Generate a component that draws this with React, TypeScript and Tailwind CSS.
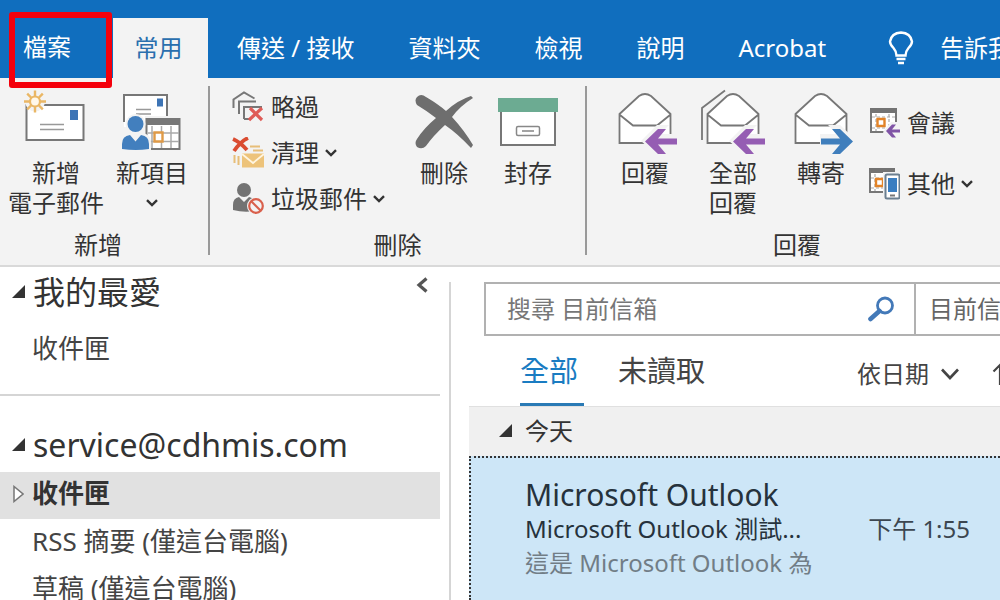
import type { ReactNode } from "react";

function ChevronDown({ wide = false }: { wide?: boolean }) {
  return wide ? (
    <svg className="h-3 w-[18px]" viewBox="0 0 18 12" fill="none" stroke="#444" strokeWidth="2.6">
      <path d="M1 1.500 9 10l8-8.500" />
    </svg>
  ) : (
    <svg className="h-2 w-3" viewBox="0 0 12 8" fill="none" stroke="#333" strokeWidth="2.4">
      <path d="M1 1.200 6 6l5-4.800" />
    </svg>
  );
}

function ExpandedMark() {
  return (
    <svg className="h-[13px] w-[13px] shrink-0" viewBox="0 0 13 13" fill="#333">
      <path d="M13 0v13H0z" />
    </svg>
  );
}

function NewMailIcon() {
  return (
    <svg className="h-16 w-16" viewBox="4 0 64 64" fill="none">
      <path d="M6.500 17h57v35h-57z" fill="#fff" stroke="#777" strokeWidth="2" />
      <path d="M50 22h8v10h-8z" fill="#3d74b5" />
      <path d="M20 36.500h24M20 41.500h24" stroke="#999" strokeWidth="1.500" />
      <circle cx="15" cy="13.500" r="10" fill="#f3f3f3" />
      <path d="M15 2.500v6M15 18.500v6M4 13.500h6M20 13.500h6M7.200 5.700l4.300 4.300M18.500 17l4.300 4.300M7.200 21.300l4.300-4.300M18.500 10l4.300-4.300" stroke="#eab765" strokeWidth="2.400" />
      <circle cx="15" cy="13.500" r="5" fill="#fff8ea" stroke="#eab765" strokeWidth="2.200" />
    </svg>
  );
}

function NewItemsIcon() {
  return (
    <svg className="h-16 w-16" viewBox="2 0 64 64" fill="none">
      <path d="M6 7h43v32H6z" fill="#fff" />
      <path d="M6 34V7h43v22" stroke="#777" strokeWidth="2" />
      <path d="M39 10.500h6v8h-6z" fill="#3d74b5" />
      <path d="M18 21.500h15M18 26h15" stroke="#999" strokeWidth="1.500" />
      <path d="M27 28h37v37H27z" fill="#f3f3f3" />
      <path d="M28.500 31h33v30h-33z" fill="#fff" stroke="#777" strokeWidth="2" />
      <path d="M28 30h34v7H28z" fill="#777" />
      <path d="M34 38v22M43.500 38v22M53 38v22M30 45h31M30 53.500h31" stroke="#aaa" strokeWidth="1.500" />
      <path d="M36.500 44.500h8v9h-8z" fill="#fff" stroke="#df9a47" strokeWidth="2.400" />
      <path d="M2 62V54q0-8 9-9h13q9 1 9 9v8z" fill="#f3f3f3" />
      <circle cx="17.500" cy="36" r="10" fill="#f3f3f3" />
      <circle cx="17.500" cy="36" r="8" fill="#427fbe" />
      <path d="M4 61v-5q0-8 8-9l5.500 6.500L23 47q8 1 8 9v5q-13 2-27 0z" fill="#427fbe" />
    </svg>
  );
}

function IgnoreIcon() {
  return (
    <svg className="h-8 w-8" viewBox="0 2 32 32" fill="none" stroke="#777" strokeWidth="2">
      <path d="M1.500 19V10.500L12 3.500l10.500 6" />
      <path d="M7 25V12.500h17" />
      <path d="M12 30V18h18M12 30h5" />
      <path d="M18 19l12 12M30 19 17 31" stroke="#df5c57" strokeWidth="3.200" />
    </svg>
  );
}

function CleanUpIcon() {
  return (
    <svg className="h-8 w-8" viewBox="0 0 32 32" fill="none">
      <path d="M18 9.500h10M21 13.500h10M2.500 18v8M6.500 19v9" stroke="#e7be78" strokeWidth="2" />
      <path d="M10 16.500h22v14H10z" fill="#edc37a" />
      <path d="m10 17 11 9 11-9" stroke="#fff5e0" strokeWidth="1.800" />
      <path d="M1 2q7 3 14 11M16 1Q9 4 2 14" stroke="#da4c31" strokeWidth="3.800" />
    </svg>
  );
}

function JunkIcon() {
  return (
    <svg className="h-8 w-8" viewBox="0 1 32 32" fill="none">
      <circle cx="12" cy="8" r="7" fill="#737373" />
      <path d="M1 28v-5q0-7 6-8l5 5 5-5q5 1 6 7v7q-11 2-22-1z" fill="#737373" />
      <circle cx="24" cy="24" r="9" fill="#f3f3f3" />
      <circle cx="24" cy="24" r="6.800" fill="#f3f3f3" stroke="#d9604c" strokeWidth="2.200" />
      <path d="m19.500 19.500 9 9" stroke="#d9604c" strokeWidth="2.200" />
    </svg>
  );
}

function DeleteIcon() {
  return (
    <svg className="h-16 w-16" viewBox="0 0 64 64" fill="#6e6e6e">
      <path d="M5 9q4-4 9 0 12 7 20 14 12-11 25-15l2 2Q48 18 40 29q12 13 21 28l-2 3Q46 46 33 37 21 48 14 58q-4 4-9 1-3-4 0-8 7-11 19-21Q15 23 5 17q-3-5 0-8z" />
    </svg>
  );
}

function ArchiveIcon() {
  return (
    <svg className="h-16 w-16" viewBox="0 0 64 64" fill="none">
      <path d="M5 22h54v35H5z" fill="#fff" stroke="#777" strokeWidth="2" />
      <path d="M2 10h60v14H2z" fill="#6cab92" />
      <rect x="20.500" y="38.500" width="23" height="9" rx="1.500" stroke="#888" strokeWidth="1.500" />
      <path d="M26 43h12" stroke="#999" strokeWidth="1.800" />
    </svg>
  );
}

function ReplyIcon({ kind }: { kind: "reply" | "all" | "forward" }) {
  return (
    <svg className="h-16 w-16 overflow-visible" viewBox="0 0 64 64" fill="none">
      {kind === "all" && <path d="M1 52V20L24 2.500" stroke="#777" strokeWidth="1.800" />}
      <path d="M6.500 26 26 8q6-4 12 0l19.500 18v29h-51z" fill="#fff" />
      <path d="M32 55H6.500V26L26 8q6-4 12 0l19.500 18v20M7 27l13 10.500h24L57 27" stroke="#777" strokeWidth="1.800" />
      {kind === "forward" ? (
        <>
          <path d="M31 46h17l-9-9h12l17 16-15 14H39l8-9H31z" fill="#f3f3f3" />
          <path d="M32 50.500h19l-8-9.500h8l13 12.500L51 66h-8l8-9.500H32z" fill="#3f7ebc" />
        </>
      ) : (
        <>
          <path d="M64 46H47l9-9H44L28 53l16 14h20z" fill="#f3f3f3" />
          <path d="M64 50.500H45l8-9.500h-8L32 53.500 45 66h8l-8-9.500h19z" fill="#955db3" />
        </>
      )}
    </svg>
  );
}

function MeetingIcon() {
  return (
    <svg className="h-8 w-8" viewBox="0 2 32 32" fill="none">
      <path d="M3 4h25v23H3z" fill="#fff" stroke="#777" strokeWidth="2" />
      <path d="M2 3h27v5H2z" fill="#737373" />
      <path d="M8 9v17M21 9v17M4 12h23M4 23h23" stroke="#aaa" strokeWidth="1.200" strokeDasharray="3 2" />
      <path d="M9.500 14h7v7h-7z" fill="#fff" stroke="#e28328" strokeWidth="2.400" />
      <path d="M32 17v17H18l-3-7 8-10z" fill="#f3f3f3" />
      <path d="M32 24.500h-8l4-5h-4L18 26l6 6.500h4l-4-5h8z" fill="#8054a6" />
    </svg>
  );
}

function MoreReplyIcon() {
  return (
    <svg className="h-8 w-8" viewBox="0 0 32 32" fill="none">
      <path d="M2 1h24v23H2z" fill="#fff" stroke="#777" strokeWidth="2" />
      <path d="M1 0h26v5H1z" fill="#737373" />
      <path d="M7 6v17M3 10h22M3 20h22" stroke="#aaa" strokeWidth="1.200" strokeDasharray="3 2" />
      <path d="M8 11h7v7H8z" fill="#fff" stroke="#e28328" strokeWidth="2.400" />
      <path d="M15 4h17v28H15z" fill="#f3f3f3" />
      <rect x="17.500" y="6.500" width="14" height="24" rx="1.500" fill="#fff" stroke="#6b7f90" strokeWidth="2" />
      <path d="M20 10h9v14h-9z" fill="#3a7ec1" />
      <path d="M22 27.500h5" stroke="#777" strokeWidth="2" />
    </svg>
  );
}

function BulbIcon() {
  return (
    <svg className="h-[34px] w-[26px]" viewBox="0 0 26 34" fill="none" stroke="#fff" strokeWidth="2.400">
      <path d="M8.500 24.500q0-4-3-7.500-3.500-3.500-3.500-6.500Q3.500 2 13 1.500 22.500 2 24 10.500q0 3-3.500 6.500-3 3.500-3 7.500zM8.500 28h9M10 32h6" />
    </svg>
  );
}

function BigButton({ icon, children, className }: { icon: ReactNode; children: ReactNode; className: string }) {
  return (
    <button type="button" className={`flex shrink-0 flex-col items-center pt-2.5 ${className}`}>
      {icon}
      <span className="mt-1.5 flex flex-col items-center whitespace-nowrap">{children}</span>
    </button>
  );
}

function SmallButton({ icon, label, menu = false, className }: { icon: ReactNode; label: string; menu?: boolean; className: string }) {
  return (
    <button type="button" className={`flex items-center whitespace-nowrap ${className}`}>
      {icon}
      <span className="ml-[7px]">{label}</span>
      {menu && (
        <span className="ml-1.5">
          <ChevronDown />
        </span>
      )}
    </button>
  );
}

function Group({ label, children, className }: { label: string; children: ReactNode; className: string }) {
  return (
    <section aria-label={label} className={`flex shrink-0 flex-col ${className}`}>
      <div className="flex h-[152px] items-start">{children}</div>
      <h2 className="text-center">{label}</h2>
    </section>
  );
}

function Divider() {
  return <div className="mt-2 mb-2.5 w-0.5 shrink-0 bg-[#999]" />;
}

const tabs = ["傳送 / 接收", "資料夾", "檢視", "說明", "Acrobat"];

function TabBar() {
  return (
    <nav className="relative flex items-end bg-[#106ebe] pt-[18px] text-2xl leading-[30px] whitespace-nowrap text-white">
      <button type="button" className="h-[58px] w-[113px] shrink-0 self-start pl-[23px] text-left">檔案</button>
      <button type="button" className="h-[60px] w-[95px] shrink-0 bg-[#f3f3f3] pr-1 text-[#2a6fae]">常用</button>
      <div className="flex h-[60px] shrink-0 items-center gap-[54px] pl-[29px]">
        {tabs.map((tab) => (
          <button type="button" key={tab}>{tab}</button>
        ))}
      </div>
      <button type="button" className="ml-[62px] flex h-[60px] shrink-0 items-center gap-[26px]">
        <BulbIcon />
        告訴我
      </button>
      <div className="pointer-events-none absolute top-3 left-[9px] h-[76px] w-[103px] rounded-[3px] border-[6px] border-[#f4000c]" />
    </nav>
  );
}

function Ribbon() {
  return (
    <div className="flex border-b-2 border-[#d9d9d9] bg-[#f3f3f3] text-2xl leading-[30px] text-[#333]">
      <Group label="新增" className="pr-5 pb-[5px] pl-2">
        <BigButton icon={<NewMailIcon />} className="w-24">
          <span>新增</span>
          <span>電子郵件</span>
        </BigButton>
        <BigButton icon={<NewItemsIcon />} className="ml-3 w-[72px]">
          <span>新項目</span>
          <span className="flex h-[30px] items-center"><ChevronDown /></span>
        </BigButton>
      </Group>
      <Divider />
      <Group label="刪除" className="w-[375px] px-[22px] pb-[5px]">
        <div className="flex w-[180px] shrink-0 flex-col items-start pt-1.5">
          <SmallButton className="h-[46px]" icon={<IgnoreIcon />} label="略過" />
          <SmallButton className="h-[46px]" icon={<CleanUpIcon />} label="清理" menu />
          <SmallButton className="h-[46px]" icon={<JunkIcon />} label="垃圾郵件" menu />
        </div>
        <BigButton icon={<DeleteIcon />} className="w-16">刪除</BigButton>
        <BigButton icon={<ArchiveIcon />} className="ml-5 w-16">封存</BigButton>
      </Group>
      <Divider />
      <Group label="回覆" className="pr-5 pb-[5px] pl-[26px]">
        <div className="flex gap-6">
          <BigButton icon={<ReplyIcon kind="reply" />} className="w-16">回覆</BigButton>
          <BigButton icon={<ReplyIcon kind="all" />} className="w-16">
            <span>全部</span>
            <span>回覆</span>
          </BigButton>
          <BigButton icon={<ReplyIcon kind="forward" />} className="w-16">轉寄</BigButton>
        </div>
        <div className="ml-[15px] flex w-[113px] flex-col items-start pt-3.5">
          <SmallButton className="h-[61px]" icon={<MeetingIcon />} label="會議" />
          <SmallButton className="h-[61px]" icon={<MoreReplyIcon />} label="其他" menu />
        </div>
      </Group>
    </div>
  );
}

function Sidebar() {
  return (
    <aside className="flex w-[451px] shrink-0">
      <div className="w-[440px] text-[26px] leading-[47px] whitespace-nowrap text-[#444]">
        <div className="flex h-12 items-center justify-between pr-3">
          <button type="button" className="flex items-center gap-2 pl-3 text-[32px] text-[#333]">
            <ExpandedMark />
            我的最愛
          </button>
          <button type="button" aria-label="摺疊" className="mb-3">
            <svg className="h-4 w-3" viewBox="0 0 12 16" fill="none" stroke="#555" strokeWidth="3.200">
              <path d="M10.500 1.500 3 8l7.500 6.500" />
            </svg>
          </button>
        </div>
        <a href="#favorite-inbox" className="mt-2.5 mb-[22px] block pl-8">收件匣</a>
        <div className="h-0.5 bg-[#d5d5d5]" />
        <button type="button" className="mt-[22px] mb-0.5 flex h-[52px] items-center gap-2 pl-3 text-[32px] text-[#333]">
          <ExpandedMark />
          service@cdhmis.com
        </button>
        <a href="#inbox" className="flex h-[47px] items-center gap-2 bg-[#e1e1e1] pb-1 pl-[13px] font-bold text-[#333]">
          <svg className="h-[18px] w-[11px]" viewBox="0 0 11 18" fill="#fff" stroke="#777" strokeWidth="1.500">
            <path d="M1 1.500v15L10 9z" />
          </svg>
          收件匣
        </a>
        <a href="#rss" className="-mt-px block pl-8">RSS 摘要 (僅這台電腦)</a>
        <a href="#drafts" className="block pl-8">草稿 (僅這台電腦)</a>
      </div>
      <div className="mt-[15px] ml-[9px] w-0.5 bg-[#d5d5d5]" />
    </aside>
  );
}

function MessageList() {
  return (
    <main className="ml-[18px] flex min-w-0 flex-1 flex-col overflow-hidden whitespace-nowrap">
      <form className="mt-[15px] -mr-[50px] ml-[15px] flex h-[54px] border-2 border-[#b1b1b1] text-2xl text-[#666]">
        <input
          type="search"
          aria-label="搜尋 目前信箱"
          placeholder="搜尋 目前信箱"
          className="min-w-0 flex-1 bg-transparent pl-[21px] outline-none placeholder:text-[#777]"
        />
        <button type="button" aria-label="搜尋" className="px-5">
          <svg className="h-[26px] w-[26px]" viewBox="0 0 26 26" fill="none" stroke="#4379b8">
            <circle cx="17" cy="9.500" r="7.500" strokeWidth="2.800" />
            <path d="M11.500 15 2.500 23" strokeWidth="4.600" strokeLinecap="round" />
          </svg>
        </button>
        <select aria-label="搜尋範圍" className="w-[134px] appearance-none border-l-2 border-[#b1b1b1] pl-[13px]">
          <option>目前信箱</option>
        </select>
      </form>
      <div className="-mr-5 flex h-[70px] shrink-0 items-stretch pl-[51px]">
        <button type="button" className="w-16 border-b-[3px] border-[#2a7ab5] pt-0.5 text-left text-[29px] text-[#1a7cc2]">全部</button>
        <button type="button" className="ml-[34px] border-b-[3px] border-transparent pt-0.5 text-[29px] text-[#444]">未讀取</button>
        <button type="button" className="ml-auto flex items-center gap-3 pt-1.5 text-2xl text-[#444]">
          依日期
          <ChevronDown wide />
        </button>
        <button type="button" aria-label="反轉排序" className="ml-[33px] pt-1.5">
          <svg className="h-[22px] w-[16px]" viewBox="0 0 16 22" fill="none" stroke="#444" strokeWidth="2.200">
            <path d="M8 22V2M1.500 8.500 8 2l6.500 6.500" />
          </svg>
        </button>
        <div className="w-3" />
      </div>
      <button type="button" className="flex h-[50px] shrink-0 items-center gap-[13px] border-t border-[#e0e0e0] bg-[#f0f0f0] pb-0.5 pl-[30px] text-2xl text-[#333]">
        <ExpandedMark />
        今天
      </button>
      <article className="flex-1 border-t-2 border-l-2 border-dotted border-[#333] bg-[#cde6f7] pt-5 pr-[30px] pl-[54px] text-2xl leading-[34px] text-[#26323c]">
        <h3 className="text-[30px] leading-[34px]">Microsoft Outlook</h3>
        <div className="flex justify-between">
          <p>Microsoft Outlook 測試...</p>
          <time className="text-[#3c4650]">下午 1:55</time>
        </div>
        <p className="text-[#717d86]">這是 Microsoft Outlook 為</p>
      </article>
    </main>
  );
}

export default function App() {
  return (
    <div className="flex h-screen flex-col overflow-hidden bg-white font-['Noto_Sans','Noto_Sans_CJK_TC',sans-serif]">
      <TabBar />
      <Ribbon />
      <div className="flex min-h-0 flex-1 overflow-hidden">
        <Sidebar />
        <MessageList />
      </div>
    </div>
  );
}
